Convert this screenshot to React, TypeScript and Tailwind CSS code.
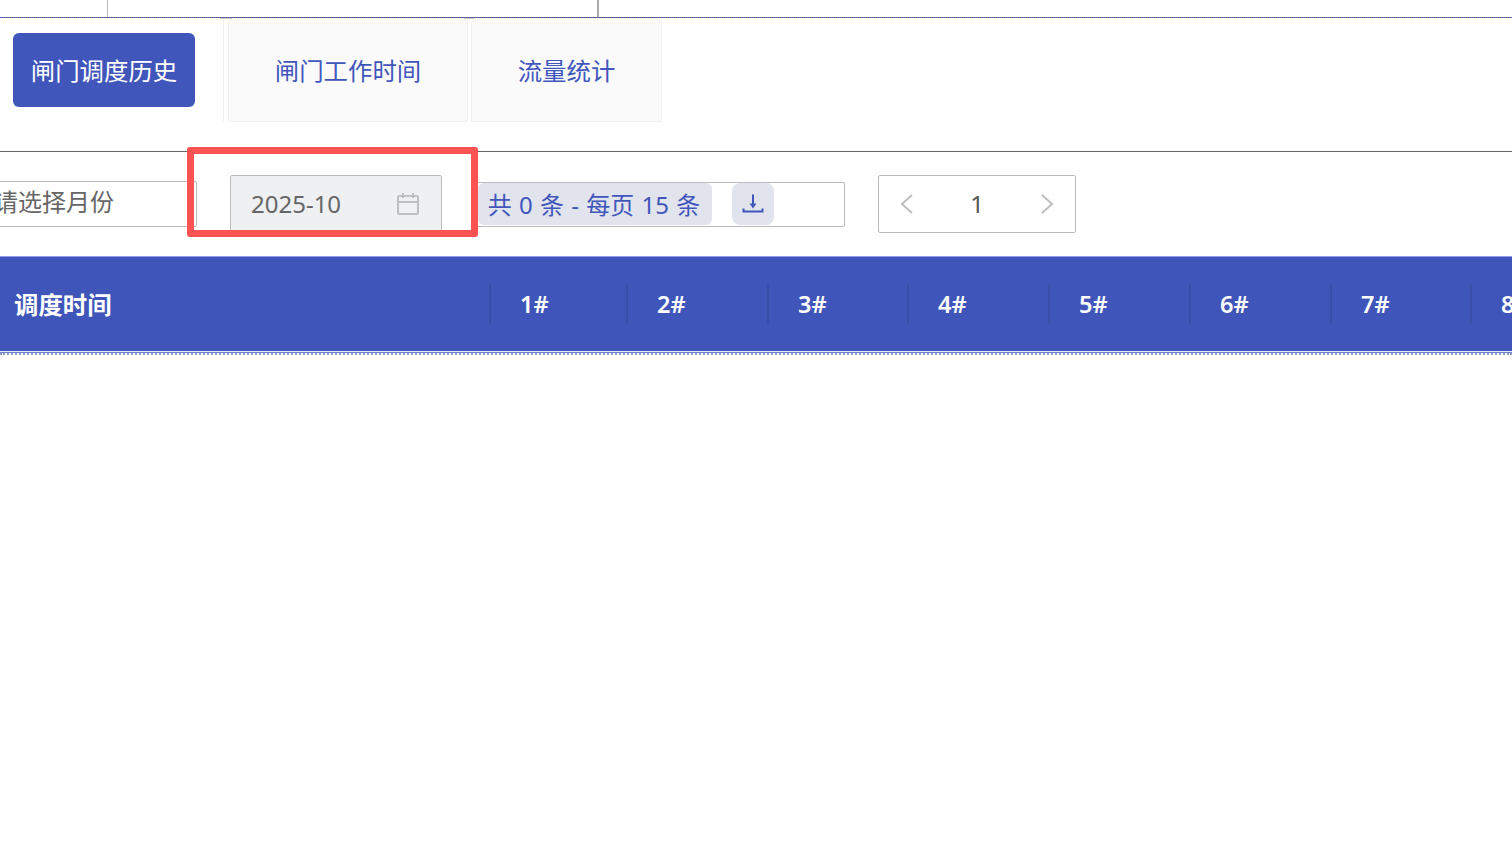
const cjk = "font-['Noto_Sans','Noto_Sans_CJK_SC',sans-serif]";

const columns = [
  { label: "1#", width: "w-[137px]" },
  { label: "2#", width: "w-[141px]" },
  { label: "3#", width: "w-[140px]" },
  { label: "4#", width: "w-[141px]" },
  { label: "5#", width: "w-[141px]" },
  { label: "6#", width: "w-[141px]" },
  { label: "7#", width: "w-[140px]" },
  { label: "8#", width: "w-[141px]" },
];

const TopStrip = () => (
  <div>
    <div className="flex h-[17px]">
      <div className="w-[108px] border-r border-[#bbb]" />
      <div className="w-[491px] border-r-2 border-[#aaa]" />
    </div>
    <div className="h-px border-b border-dotted border-[#4055b9] bg-[#777]" />
  </div>
);

const Tabs = () => (
  <div className="relative flex h-[134px] items-start border-b border-[#666]">
    <div className="flex h-[104px] w-[224px] items-start border-r border-[#f0f0f0] pl-[13px] pt-[15px]">
      <button className="flex h-[74px] w-[182px] items-center justify-center rounded-[6px] bg-[#4156bb] pt-[2px] text-[24.4px] text-white">
        闸门调度历史
      </button>
    </div>
    <div className="ml-1 flex h-[104px] w-[240px] items-center justify-center rounded-t-[6px] border border-[#f0f0f0] bg-[#fafafa] pt-[2px] text-[24.4px] text-[#4156bb]">
      闸门工作时间
    </div>
    <div className="ml-[3px] flex h-[104px] w-[191px] items-center justify-center rounded-t-[6px] border border-[#f0f0f0] bg-[#fafafa] pt-[2px] text-[24.4px] text-[#4156bb]">
      流量统计
    </div>
    <span className="absolute left-[220px] top-0 h-px w-3 bg-[#ccc]" />
    <span className="absolute left-[464px] top-0 h-px w-[10px] bg-[#ccc]" />
  </div>
);

const CalendarIcon = () => (
  <svg width="24" height="24" viewBox="0 0 24 24" fill="none" stroke="#bfbfbf" strokeWidth="2">
    <rect x="2" y="4" width="20" height="18" rx="1" />
    <path d="M2 10h20M7 1v5M17 1v5" />
  </svg>
);

const DownloadIcon = () => (
  <svg width="22" height="22" viewBox="0 0 22 22" fill="none" stroke="#4156bb" strokeWidth="2">
    <path d="M11 0.500v10" />
    <path d="M7.500 9.500h7L11 14.500z" fill="#4156bb" stroke="none" />
    <path d="M1.500 14.500v3h19v-3" />
  </svg>
);

const FilterBar = () => (
  <div className="flex h-[104px] items-start overflow-hidden">
    <div className="-ml-[40px] mt-[29px] flex h-[46px] w-[237px] items-center rounded-[2px] border border-[#bbb] pb-[5px] pl-[33px] text-[24px] text-[#666]">
      请选择月份
    </div>
    <div className="ml-[33px] mt-[23px] flex h-[58px] w-[212px] items-center justify-between rounded-[2px] border border-[#bbb] bg-[#eff0f2] pl-5 pr-[21px] text-[24px] text-[#666]">
      <span>2025-10</span>
      <CalendarIcon />
    </div>
    <div className="ml-[30px] mt-[30px] flex h-[45px] w-[373px] items-start rounded-[2px] border-y border-r border-[#bbb] pl-[6px]">
      <div className="flex h-[42px] w-[234px] items-center justify-center rounded-[6px] bg-[#e1e4ed] pr-[2px] pt-[2px] text-[24px] text-[#4156bb] [word-spacing:1px]">
        共 0 条 - 每页 15 条
      </div>
      <button className="ml-5 flex h-[42px] w-[42px] items-center justify-center rounded-[8px] bg-[#e1e4ed] pt-[2px]">
        <DownloadIcon />
      </button>
    </div>
    <div className="ml-[33px] mt-[23px] flex h-[58px] w-[198px] items-center justify-between rounded-[2px] border border-[#bbb] px-5 text-[24px] text-[#555]">
      <svg width="16" height="20" viewBox="0 0 16 20" fill="none" stroke="#bfbfbf" strokeWidth="2">
        <path d="M13 1 3 10l10 9" />
      </svg>
      <span>1</span>
      <svg width="16" height="20" viewBox="0 0 16 20" fill="none" stroke="#bfbfbf" strokeWidth="2">
        <path d="m3 1 10 9-10 9" />
      </svg>
    </div>
  </div>
);

const TableHeader = () => (
  <div>
    <div className="flex h-[95px] items-center overflow-hidden border-t border-[#8fa0e8] bg-[#4055b9] font-semibold text-white">
      <div className="w-[489px] shrink-0 pl-[14px] pt-[2px] text-[24.4px]">调度时间</div>
      {columns.map((col) => (
        <div
          key={col.label}
          className={`flex h-10 shrink-0 items-center border-l-2 border-[#3a4ea9] pl-[29px] pt-[2px] text-[23.5px] ${col.width}`}
        >
          {col.label}
        </div>
      ))}
    </div>
    <div className="h-px bg-[#e3e7f8]" />
    <div className="h-px bg-[#6f80cf]" />
    <div className="h-[2px] border-b-2 border-dotted border-[#8f9bc8]" />
  </div>
);

export default function App() {
  return (
    <div className={`relative h-[847px] w-[1512px] overflow-hidden bg-white ${cjk}`}>
      <TopStrip />
      <Tabs />
      <FilterBar />
      <TableHeader />
      <div className="pointer-events-none absolute left-[187px] top-[147px] h-[90px] w-[291px] rounded-[3px] border-[7px] border-[#fb5252]" />
    </div>
  );
}
